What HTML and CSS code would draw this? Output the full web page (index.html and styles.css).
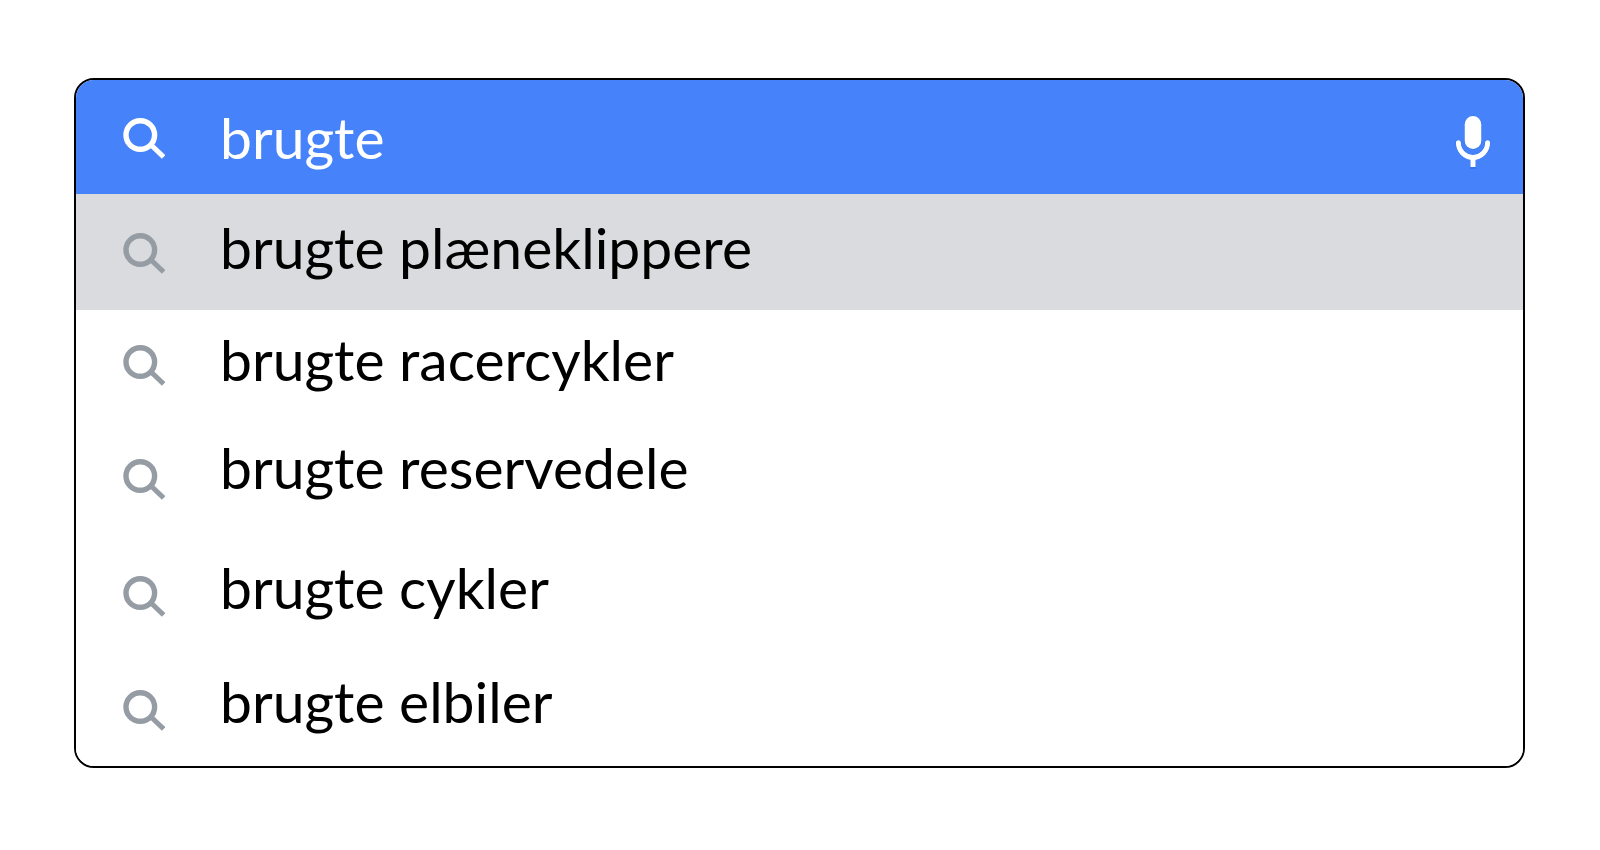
FILE: index.html
```
<!DOCTYPE html>
<html lang="da">
<head>
  <meta charset="utf-8">
  <title>Søgning</title>
  <link rel="stylesheet" href="styles.css">
</head>
<body>
  <svg class="sprite" aria-hidden="true">
    <symbol id="search" viewBox="0 0 42 42">
      <circle cx="17.300" cy="17" r="14.3" fill="none" stroke="currentColor" stroke-width="5.4"/>
      <path d="M27.300 26.2 40.600 38.9" fill="none" stroke="currentColor" stroke-width="5"/>
    </symbol>
  </svg>

  <form class="search-box">
    <div class="search-bar">
      <label for="query" class="icon-label" aria-label="Søg"><svg class="icon"><use href="#search"/></svg></label>
      <input type="text" id="query" class="query" value="brugte" autocomplete="off" spellcheck="false">
      <button type="button" class="mic" aria-label="Talesøgning">
        <svg class="mic-icon" viewBox="0 0 36 54">
          <g class="mic-edge">
            <rect x="9.7" y="1" width="16.6" height="33" rx="8.3"/>
            <path d="M3.4 27.8a14.6 14.6 0 0 0 29.2 0M18 43v9"/>
          </g>
          <rect x="9.7" y="1" width="16.6" height="33" rx="8.3" fill="#fff"/>
          <path d="M3.4 27.8a14.6 14.6 0 0 0 29.2 0" fill="none" stroke="#fff" stroke-width="5" stroke-linecap="round"/>
          <path d="M18 42v10" stroke="#fff" stroke-width="5"/>
        </svg>
      </button>
    </div>

    <ul class="suggestions">
      <li><button type="button" class="suggestion active"><svg class="icon"><use href="#search"/></svg><span>brugte plæneklippere</span></button></li>
      <li><button type="button" class="suggestion short"><svg class="icon"><use href="#search"/></svg><span>brugte racercykler</span></button></li>
      <li><button type="button" class="suggestion tall"><svg class="icon"><use href="#search"/></svg><span>brugte reservedele</span></button></li>
      <li><button type="button" class="suggestion"><svg class="icon"><use href="#search"/></svg><span>brugte cykler</span></button></li>
      <li><button type="button" class="suggestion"><svg class="icon"><use href="#search"/></svg><span>brugte elbiler</span></button></li>
    </ul>
  </form>
</body>
</html>
```
FILE: styles.css
```
* {
  box-sizing: border-box;
}
body {
  margin: 0;
  padding: 78px 75px 78px 74px;
  background: #fff;
  font-family: Lato, sans-serif;
  font-size: 57px;
  line-height: 66px;
  color: #000;
}
.sprite {
  display: none;
}
.search-box {
  border: 2px solid #000;
  border-radius: 20px;
  overflow: hidden;
}
.search-bar {
  display: flex;
  align-items: center;
  gap: 55px;
  height: 114px;
  padding: 4px 32px 0 47px;
  background: #4683fb;
  color: #fff;
}
.icon-label {
  display: flex;
}
.icon {
  display: block;
  flex: none;
  width: 42px;
  height: 42px;
}
.query {
  flex: 1;
  min-width: 0;
  padding: 0 0 4px;
  border: none;
  outline: none;
  background: none;
  color: inherit;
  font: inherit;
}
.mic {
  display: flex;
  padding: 6px 0 0;
  border: none;
  background: none;
  cursor: pointer;
}
.mic-icon {
  width: 36px;
  height: 54px;
}
.mic-edge {
  fill: none;
  stroke: #2f75f4;
  stroke-width: 6;
  stroke-linecap: round;
}
.mic-edge rect {
  stroke-width: 1;
}
.suggestions {
  margin: 0;
  padding: 0;
  list-style: none;
}
.suggestion {
  display: flex;
  align-items: center;
  gap: 55px;
  width: 100%;
  height: 114px;
  padding: 4px 32px 0 47px;
  border: none;
  background: #fff;
  color: inherit;
  font: inherit;
  text-align: left;
  cursor: pointer;
}
.suggestion .icon {
  color: #959ca4;
}
.suggestion span {
  align-self: flex-start;
  padding-top: 12px;
}
.suggestion.short {
  height: 108px;
}
.suggestion.tall {
  height: 120px;
}
.suggestion.active {
  height: 116px;
  background: #dadbdf;
}
.suggestion.active span {
  padding-top: 16px;
}
```
